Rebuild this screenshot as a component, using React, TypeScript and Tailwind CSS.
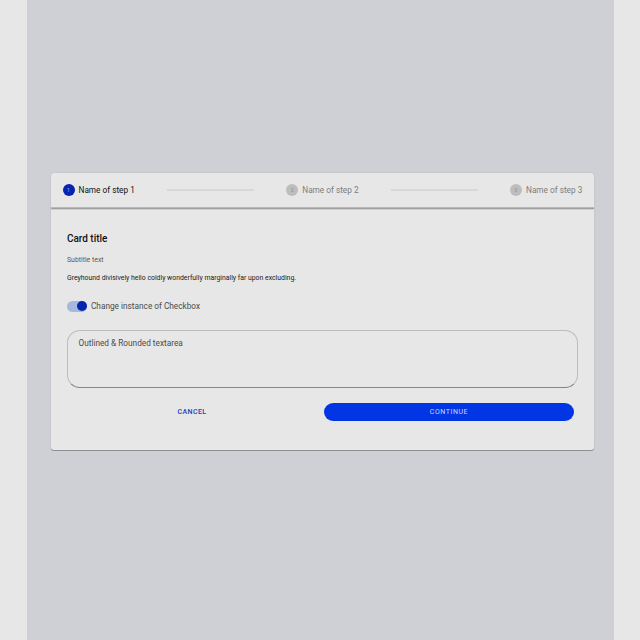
type StepProps = { index: number; active?: boolean };

function Step({ index, active = false }: StepProps) {
  return (
    <div className="flex items-center gap-1">
      <span
        className={`flex size-3 shrink-0 items-center justify-center rounded-full text-[5px] leading-none ${
          active ? "bg-[#0525b0] text-[#a9b8ee]" : "bg-[#bdbdbd] text-[#929292]"
        }`}
      >
        {index}
      </span>
      <span
        className={`w-14 whitespace-nowrap text-[8.25px] leading-3 ${
          active ? "text-[#111]" : "text-[#7d7d7d]"
        }`}
      >
        Name of step {index}
      </span>
    </div>
  );
}

function Connector() {
  return <span className="h-[2px] w-[87px] bg-[#d8d8d8]" />;
}

export default function App() {
  return (
    <div className="h-[640px] w-[640px] overflow-hidden bg-[#e7e7e7] pl-[27px] font-['Roboto',sans-serif]">
      <main className="h-full w-[587px] bg-[#cfd0d5] pt-[173px] pl-6">
        <section className="h-[277px] w-[543px] rounded-[3px] bg-[#e7e7e7] shadow-[0_1px_0_#8f9095,0_0_2px_#b5b6bb]">
          <header className="flex h-[34px] items-center justify-between rounded-t-[3px] pr-3 pl-[11.5px] shadow-[0_1px_0_#b8b8b8,0_2px_0_#a0a0a0,0_3px_0_#d0d0d0]">
            <Step index={1} active />
            <Connector />
            <Step index={2} />
            <Connector />
            <Step index={3} />
          </header>
          <div className="pt-[25px] pr-4 pl-4">
            <h1 className="h-[14px] text-[10px] leading-[14px] font-medium tracking-[-0.03px] text-[#111]">Card title</h1>
            <p className="mt-[8px] h-3 text-[6.9px] leading-3 text-[#5a5a5a]">Subtitle text</p>
            <p className="mt-[6px] h-3 text-[6.88px] leading-3 text-[#202020]">
              Greyhound divisively hello coldly wonderfully marginally far upon excluding.
            </p>
            <label className="mt-4 flex h-3 items-center gap-1">
              <span role="switch" aria-checked="true" className="flex h-[11px] w-[20px] items-center justify-end rounded-full bg-[#a5b8df]">
                <span className="size-[10px] rounded-full bg-[#0525b0]" />
              </span>
              <span className="text-[8.25px] leading-3 text-[#4b4b4b]">Change instance of Checkbox</span>
            </label>
            <div className="mt-[18px] h-[58px] w-[511px] rounded-[13px] border border-x-[#bcbcbc] border-t-[#bcbcbc] border-b-[#858585] pt-[6px] pl-[10.5px] text-[8.25px] leading-3 text-[#4b4b4b]">
              Outlined &amp; Rounded textarea
            </div>
            <div className="mt-[15px] flex h-[18px] gap-[7px]">
              <button className="w-[250px] pt-px text-[7px] font-medium tracking-[0.45px] text-[#173fc0]">CANCEL</button>
              <button className="w-[250px] rounded-full bg-[#0236e4] pt-px text-[7px] tracking-[0.55px] text-[#cbd6ff]">CONTINUE</button>
            </div>
          </div>
        </section>
      </main>
    </div>
  );
}
